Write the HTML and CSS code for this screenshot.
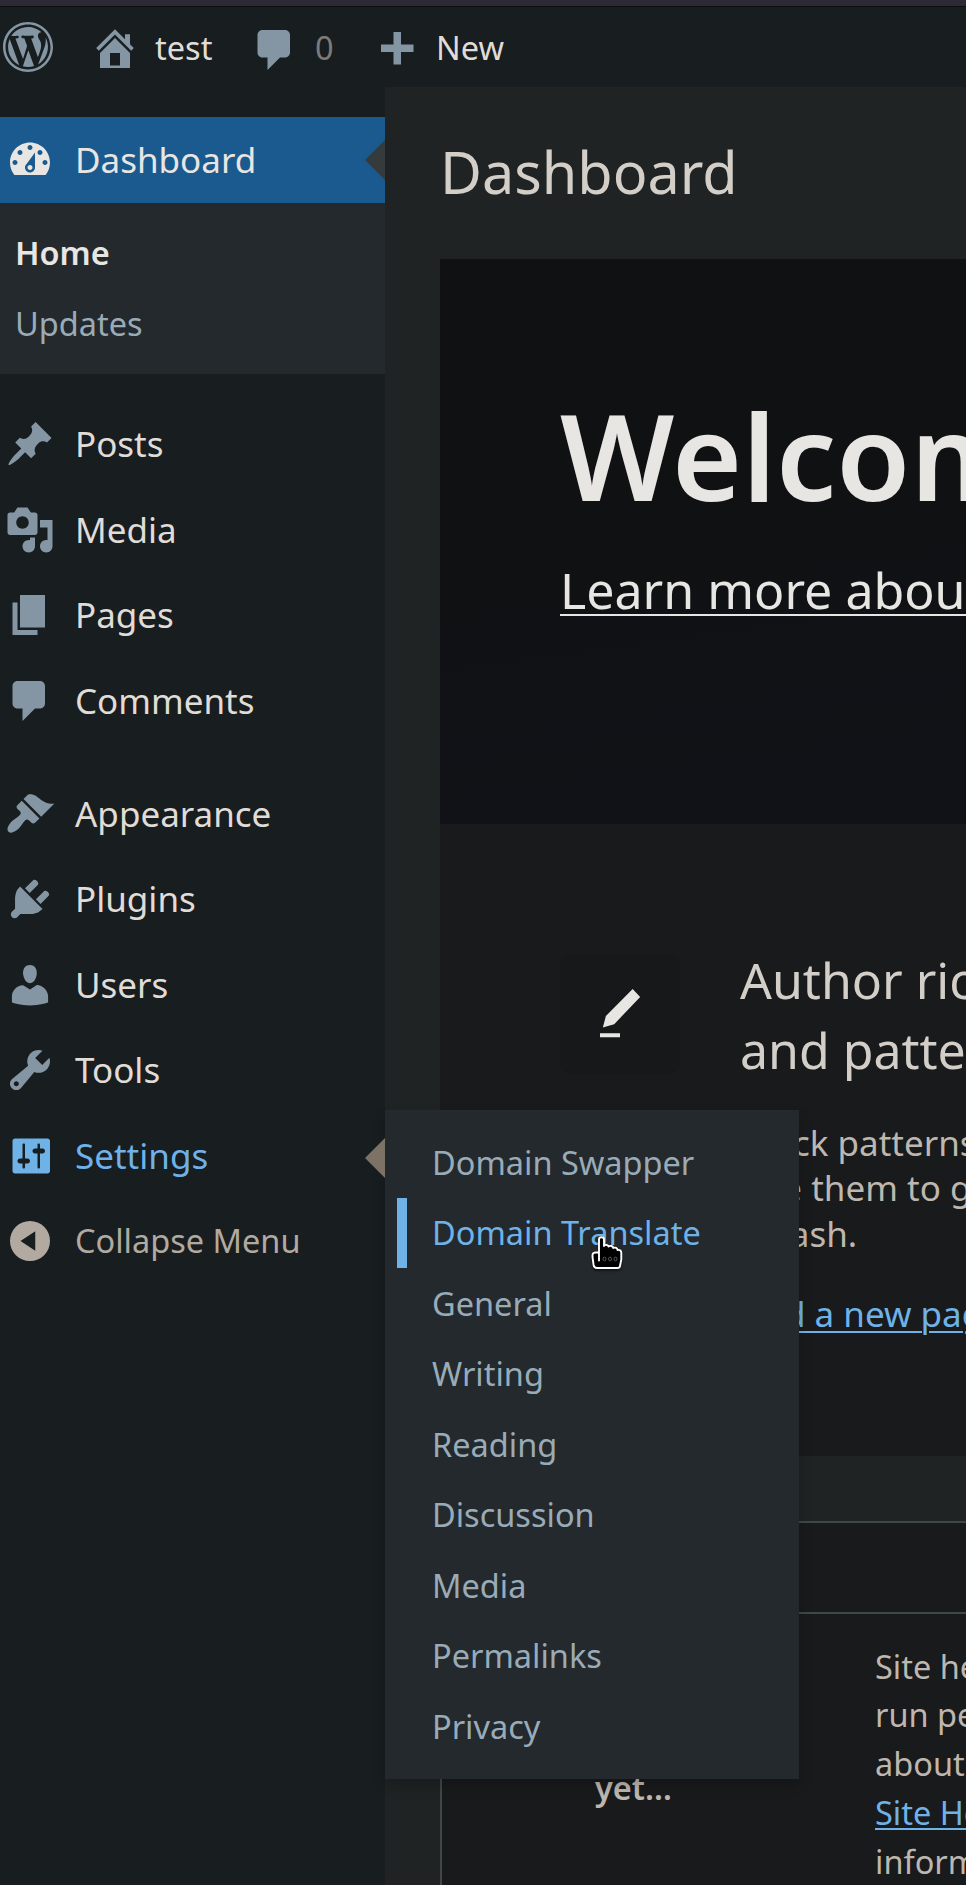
FILE: index.html
```html
<!DOCTYPE html>
<html lang="en">
<head>
<meta charset="utf-8">
<title>Dashboard</title>
<link rel="stylesheet" href="styles.css">
</head>
<body>
<div class="window-edge"></div>
<header class="adminbar">
  <svg class="icon bar-logo" viewBox="0 0 20 20"><path d="M20 10c0-5.52-4.48-10-10-10S0 4.48 0 10s4.48 10 10 10 10-4.48 10-10zM10 1.01c4.97 0 8.99 4.02 8.99 8.99s-4.02 8.99-8.99 8.99S1.01 14.97 1.01 10 5.03 1.01 10 1.01zM8.01 14.82L4.96 6.61c.49-.03 1.05-.08 1.05-.08.43-.05.38-1.01-.06-.99 0 0-1.29.1-2.13.1-.15 0-.33 0-.52-.01 1.44-2.17 3.9-3.6 6.7-3.6 2.09 0 3.99.79 5.41 2.09-.6-.08-1.45.35-1.45 1.42 0 .66.38 1.22.79 1.88.31.54.5 1.22.5 2.21 0 1.34-1.27 4.48-1.27 4.48l-2.71-7.5c.48-.03.75-.16.75-.16.43-.05.38-1.1-.05-1.08 0 0-1.3.11-2.14.11-.78 0-2.11-.11-2.11-.11-.43-.02-.48 1.06-.05 1.08l.84.08 1.12 3.04zm6.02 2.15L16.64 10s.67-1.69.39-3.81c.63 1.14.94 2.42.94 3.81 0 2.96-1.56 5.58-3.94 6.97zM2.68 6.77L6.5 17.25c-2.67-1.3-4.47-4.08-4.47-7.25 0-1.16.2-2.23.65-3.23zm7.45 4.53l2.29 6.25c-.75.27-1.57.42-2.42.42-.72 0-1.41-.11-2.06-.3z"/></svg>
  <a class="bar-item bar-site"><svg class="icon" viewBox="0 0 20 20"><path fill-rule="evenodd" d="M16 8.5l1.53 1.53-1.06 1.06L10 4.6l-6.47 6.49-1.06-1.06L10 2.5l4 4v-2h2v4zm-6-2.46l6 5.99V18H4v-5.97zM12 17v-5H8v5h4z"/></svg><span>test</span></a>
  <a class="bar-item bar-comments"><svg class="icon" viewBox="0 0 20 20"><path d="M5 2h9c1.1 0 2 .9 2 2v7c0 1.1-.9 2-2 2h-2l-5 5v-5H5c-1.1 0-2-.9-2-2V4c0-1.1.9-2 2-2z"/></svg><span>0</span></a>
  <a class="bar-item bar-new"><svg class="icon" viewBox="0 0 20 20"><path d="M17 7v3h-5v5H9v-5H4V7h5V2h3v5h5z"/></svg><span>New</span></a>
</header>
<div class="layout">
  <nav class="menu">
    <a class="item current"><svg class="icon" viewBox="0 0 20 20"><path fill-rule="evenodd" d="M3.76 16h12.48c1.1-1.37 1.76-3.11 1.76-5 0-4.42-3.58-8-8-8s-8 3.58-8 8c0 1.89.66 3.63 1.76 5zM10 4c.55 0 1 .45 1 1s-.45 1-1 1-1-.45-1-1 .45-1 1-1zM6 6c.55 0 1 .45 1 1s-.45 1-1 1-1-.45-1-1 .45-1 1-1zm8 0c.55 0 1 .45 1 1s-.45 1-1 1-1-.45-1-1 .45-1 1-1zm-5.37 5.55L12 7v6c0 1.1-.9 2-2 2s-2-.9-2-2c0-.57.24-1.08.63-1.45zM4 10c.55 0 1 .45 1 1s-.45 1-1 1-1-.45-1-1 .45-1 1-1zm12 0c.55 0 1 .45 1 1s-.45 1-1 1-1-.45-1-1 .45-1 1-1zm-5 3c0-.55-.45-1-1-1s-1 .45-1 1 .45 1 1 1 1-.45 1-1z"/></svg>Dashboard</a>
    <div class="submenu">
      <a class="active">Home</a>
      <a>Updates</a>
    </div>
    <div class="separator"></div>
    <a class="item"><svg class="icon" viewBox="0 0 20 20"><path d="M10.44 3.02l1.82-1.82 6.36 6.35-1.83 1.82c-1.05-.68-2.48-.57-3.41.36l-.75.75c-.92.93-1.04 2.35-.35 3.41l-1.83 1.82-2.41-2.41-2.8 2.79c-.42.42-3.38 2.71-3.8 2.29s1.86-3.39 2.28-3.81l2.79-2.79L4.1 9.36l1.83-1.82c1.05.69 2.48.57 3.4-.36l.75-.75c.93-.92 1.05-2.35.36-3.41z"/></svg>Posts</a>
    <a class="item"><svg class="icon" viewBox="0 0 20 20"><path fill-rule="evenodd" d="M13 11V4c0-.55-.45-1-1-1h-1.67L9 1H5L3.67 3H2c-.55 0-1 .45-1 1v7c0 .55.45 1 1 1h10c.55 0 1-.45 1-1zM7 4.5c1.38 0 2.5 1.12 2.5 2.5S8.38 9.5 7 9.5 4.5 8.38 4.5 7 5.62 4.5 7 4.5zM14 6h5v10.5c0 1.38-1.12 2.5-2.5 2.5S14 17.88 14 16.5s1.12-2.5 2.5-2.5c.17 0 .34.02.5.05V9h-3V6zm-4 8.05V13h2v3.5c0 1.38-1.12 2.5-2.5 2.5S7 17.88 7 16.5 8.12 14 9.5 14c.17 0 .34.02.5.05z"/></svg>Media</a>
    <a class="item"><svg class="icon" viewBox="0 0 20 20"><path d="M6 15V2h10v13H6zm-1 1h8v2H3V5h2v11z"/></svg>Pages</a>
    <a class="item"><svg class="icon" viewBox="0 0 20 20"><path d="M5 2h9c1.1 0 2 .9 2 2v7c0 1.1-.9 2-2 2h-2l-5 5v-5H5c-1.1 0-2-.9-2-2V4c0-1.1.9-2 2-2z"/></svg>Comments</a>
    <div class="separator"></div>
    <a class="item"><svg class="icon" viewBox="0 0 20 20"><path d="M14.48 11.06L7.41 3.99l1.5-1.5c.5-.56 2.3-.47 3.51.32 1.21.8 1.43 1.28 2.91 2.1 1.18.64 2.45 1.26 4.45.85zm-.71.71L6.7 4.7 4.93 6.47c-.39.39-.39 1.02 0 1.41l1.06 1.06c.39.39.39 1.03 0 1.42-.6.6-1.43 1.11-2.21 1.69-.35.26-.7.53-1.01.84C1.43 14.23.4 16.08 1.4 17.07c.99 1 2.84-.03 4.18-1.36.31-.31.58-.66.85-1.02.57-.78 1.08-1.61 1.69-2.21.39-.39 1.02-.39 1.41 0l1.06 1.06c.39.39 1.02.39 1.41 0z"/></svg>Appearance</a>
    <a class="item"><svg class="icon" viewBox="0 0 20 20"><path d="M13.11 4.36L9.87 7.6 8 5.73l3.24-3.24c.35-.34 1.05-.2 1.56.32.52.51.66 1.21.31 1.55zm-8 1.77l.91-1.12 9.01 9.01-1.19.84c-.71.71-2.63 1.16-3.82 1.16H6.14L4.9 17.26c-.59.59-1.54.59-2.12 0-.59-.58-.59-1.53 0-2.12l1.24-1.24v-3.88c0-1.13.4-3.19 1.09-3.89zm7.26 3.97l3.24-3.24c.34-.35 1.04-.21 1.55.31.52.51.66 1.21.31 1.55l-3.24 3.25z"/></svg>Plugins</a>
    <a class="item"><svg class="icon" viewBox="0 0 20 20"><path d="M10 9.25c-2.27 0-2.73-3.44-2.73-3.44C7 4.02 7.82 2 9.97 2c2.16 0 2.98 2.02 2.71 3.81 0 0-.41 3.44-2.68 3.44zm0 2.57L12.72 10c2.39 0 4.52 2.33 4.52 4.53v2.49s-3.65 1.13-7.24 1.13c-3.65 0-7.24-1.13-7.24-1.13v-2.49c0-2.25 1.94-4.48 4.47-4.48z"/></svg>Users</a>
    <a class="item"><svg class="icon" viewBox="0 0 20 20"><path fill-rule="evenodd" d="M16.68 9.77c-1.34 1.34-3.3 1.67-4.95.99l-5.41 6.52c-.99.99-2.59.99-3.58 0s-.99-2.59 0-3.57l6.52-5.42c-.68-1.65-.35-3.61.99-4.95 1.28-1.28 3.12-1.62 4.72-1.06l-2.89 2.89 2.82 2.82 2.86-2.87c.53 1.58.18 3.39-1.08 4.65zM3.81 16.21c.4.39 1.04.39 1.43 0 .4-.4.4-1.04 0-1.43-.39-.4-1.03-.4-1.43 0-.39.39-.39 1.03 0 1.43z"/></svg>Tools</a>
    <div class="item open"><svg class="icon" viewBox="0 0 20 20"><path fill-rule="evenodd" d="M18 16V4c0-.55-.45-1-1-1H4c-.55 0-1 .45-1 1v12c0 .55.45 1 1 1h13c.55 0 1-.45 1-1zM8 11h1c.55 0 1 .45 1 1s-.45 1-1 1H8v1.500c0 .28-.22.5-.5.5s-.5-.22-.5-.5V13H6c-.55 0-1-.45-1-1s.45-1 1-1h1V5.500c0-.28.22-.5.5-.5s.5.22.5.5V11zm5-2h-1c-.55 0-1-.45-1-1s.45-1 1-1h1V5.500c0-.28.22-.5.5-.5s.5.22.5.5V7h1c.55 0 1 .45 1 1s-.45 1-1 1h-1v5.500c0 .28-.22.5-.5.5s-.5-.22-.5-.5V9z"/></svg>Settings
      <div class="flyout">
        <a>Domain Swapper</a>
        <a class="hover">Domain Translate</a>
        <a>General</a>
        <a>Writing</a>
        <a>Reading</a>
        <a>Discussion</a>
        <a>Media</a>
        <a>Permalinks</a>
        <a>Privacy</a>
        <svg class="pointer" viewBox="0 0 32 34"><path d="M8 25.500V4.500c0-3 5-3 5 0V11c1.500-2 4.500-1 4.500.6 1.500-1.400 4.700-.6 4.700 1.400 2-1 4.300 0 4.300 2 2.500-.5 3.800 1 3.800 3v6.500L29 31c-.3 1.400-1 2-2.400 2H6c-2 0-3-1-3.400-3L1.500 22c-.3-3 .5-4.500 3-4.500H8z" fill="#000" stroke="#fff" stroke-width="1.900" stroke-linejoin="round"/><g fill="none" stroke="#888" stroke-width=".6"><ellipse cx="13.500" cy="24" rx="1.500" ry="1.900"/><ellipse cx="19" cy="24" rx="1.500" ry="1.900"/><ellipse cx="24.500" cy="24" rx="1.500" ry="1.900"/></g></svg>
      </div>
    </div>
    <a class="item collapse"><svg class="icon" viewBox="0 0 20 20"><path fill-rule="evenodd" d="M10 2a8 8 0 1 0 0 16 8 8 0 0 0 0-16zM12.100 6.100v7.800L6.200 10z"/></svg>Collapse Menu</a>
  </nav>
  <main class="content">
    <h1>Dashboard</h1>
    <section class="welcome">
      <div class="welcome-head">
        <h2>Welcome to WordPress!</h2>
        <p><a>Learn more about the 6.7 version.</a></p>
      </div>
      <div class="welcome-body">
        <svg class="tile" viewBox="0 0 48 48"><rect width="48" height="48" rx="4" fill="#17181a"/><path fill="#e8e6e3" fill-rule="evenodd" d="M32.060 17.170l-3-3.200-10.700 10.860-1.230 4.530 4.540-1.270zM16 31.700h8v1.600h-8z"/></svg>
        <div class="column">
          <h3>Author rich content with blocks<br>and patterns</h3>
          <p>Block patterns are pre-configured block layouts.<br>Use them to get inspired or create new pages in<br>a flash.</p>
          <a class="link">Add a new page</a>
        </div>
      </div>
    </section>
    <section class="postbox">
      <div class="postbox-head"></div>
      <div class="postbox-body">
        <div class="status">No<br>information<br>yet…</div>
        <div class="details">Site health checks will automatically<br>run periodically to gather information<br>about your site. You can also visit the<br><a class="link">Site Health screen</a> to gather<br>information about your site now.</div>
      </div>
    </section>
  </main>
</div>
</body>
</html>
```
FILE: styles.css
```css
* { box-sizing: border-box; }
body {
  margin: 0;
  height: 1885px;
  overflow: hidden;
  background: #181d1f;
  color: #bdb7af;
  font: 32.5px/48.75px "Noto Sans", sans-serif;
  display: flex;
  flex-direction: column;
}
h1, h2, h3, p { margin: 0; font-weight: 400; }
.window-edge { height: 7px; flex: none; background: #2d2a35; border-bottom: 1px solid #0c0e0f; }

.icon { width: 50px; height: 50px; flex: none; fill: #8496a3; }

.adminbar { display: flex; height: 80px; flex: none; padding-left: 3px; color: #e0dcd7; line-height: 82px; }
.bar-logo { margin-top: 15px; }
.bar-item { display: flex; flex: none; }
.bar-item .icon { margin-top: 16px; }
.bar-site { margin-left: 37px; width: 160px; }
.bar-site span { margin-left: 15px; }
.bar-comments { width: 121px; color: #7b7b78; }
.bar-comments .icon { margin-top: 18px; }
.bar-comments span { margin-left: 15px; }
.bar-new .icon { margin-top: 20px; }
.bar-new span { margin-left: 15px; }

.layout { display: flex; flex: 1; min-height: 0; }
.menu { width: 385px; flex: none; padding-top: 30px; position: relative; z-index: 2; }
.item {
  display: flex;
  gap: 20px;
  height: 85.5px;
  padding: 17.5px 0 0 5px;
  position: relative;
  color: #e0dcd7;
  font-size: 35px;
  line-height: 50px;
}
.current { background: #1b5a8e; color: #e8e6e3; height: 86px; }
.current .icon { fill: #e8e6e3; }
.current::after, .open::after {
  content: "";
  position: absolute;
  right: 0;
  top: 23px;
  border: 20px solid transparent;
  border-left: 0;
  border-right-color: #353a3d;
}
.open { color: #6fb2e8; }
.open .icon { fill: #6fb2e8; }
.open::after { top: 24.500px; border-right-color: #7c7265; }
.collapse { color: #b2aaa0; font-size: 32.5px; }
.collapse .icon { fill: #b2aaa0; }

.submenu { background: #23292c; padding: 14.5px 0 15px; height: 171px; }
.submenu a, .flyout > a {
  display: block;
  height: 70.5px;
  padding: 12.5px 15px;
  font-size: 32.5px;
  line-height: 45.5px;
  color: #9aabb8;
}
.submenu .active { color: #e8e6e3; font-weight: 600; }
.separator { height: 27.5px; }

.flyout {
  position: absolute;
  left: 385px;
  top: -3px;
  width: 414px;
  height: 669px;
  padding: 17.2px 12px;
  background: #23292d;
  box-shadow: 0 7px 12px rgba(0, 0, 0, .2);
}
.flyout > a { padding-left: 35px; }
.flyout > .hover { color: #6fb2e8; box-shadow: inset 10px 0 #6fb2e8; }
.pointer { position: absolute; left: 206px; top: 125px; width: 32px; height: 34px; filter: drop-shadow(0 2px 1px rgba(0, 0, 0, .5)); }

.content {
  flex: 1;
  min-width: 0;
  overflow: hidden;
  white-space: nowrap;
  background: #1f2324;
  padding: 48px 0 0 55px;
}
.content h1 { font-size: 57.5px; line-height: 75px; color: #d3cfc8; margin-bottom: 49px; }
.welcome { height: 1197px; background: #191a1c; }
.welcome-head {
  height: 565px;
  padding: 121px 0 0 120px;
  background: linear-gradient(172deg, #0f1113 50%, #111217 85%);
  color: #e8e6e3;
}
.welcome-head h2 { font-size: 120px; line-height: 150px; font-weight: 600; }
.welcome-head p { font-size: 50.1px; line-height: 70px; margin-top: 24.5px; }
.welcome-head a, .link { text-decoration: underline; text-decoration-thickness: 2px; text-underline-offset: 5px; }
.welcome-body { display: flex; gap: 60px; padding: 130px 0 0 120px; }
.tile { width: 120px; height: 120px; flex: none; }
.column { margin-top: -9.5px; font-size: 35px; }
.column h3 { font-size: 50px; line-height: 70px; color: #d3cfc8; }
.column p { margin: 35px 0; line-height: 45.5px; }
.column .link { display: block; line-height: 45.5px; text-underline-offset: 4px; }
.link { color: #6fb2e8; }

.postbox { margin-top: 65px; width: 1100px; height: 500px; border: 2px solid #3f4747; background: #191a1c; }
.postbox-head { height: 91px; border-bottom: 2px solid #3f4747; }
.postbox-body { display: flex; padding: 28.6px 0 0 153px; }
.status { width: 280px; flex: none; padding-top: 24.4px; font-weight: 600; }
.details .link { text-underline-offset: 3px; }
```
